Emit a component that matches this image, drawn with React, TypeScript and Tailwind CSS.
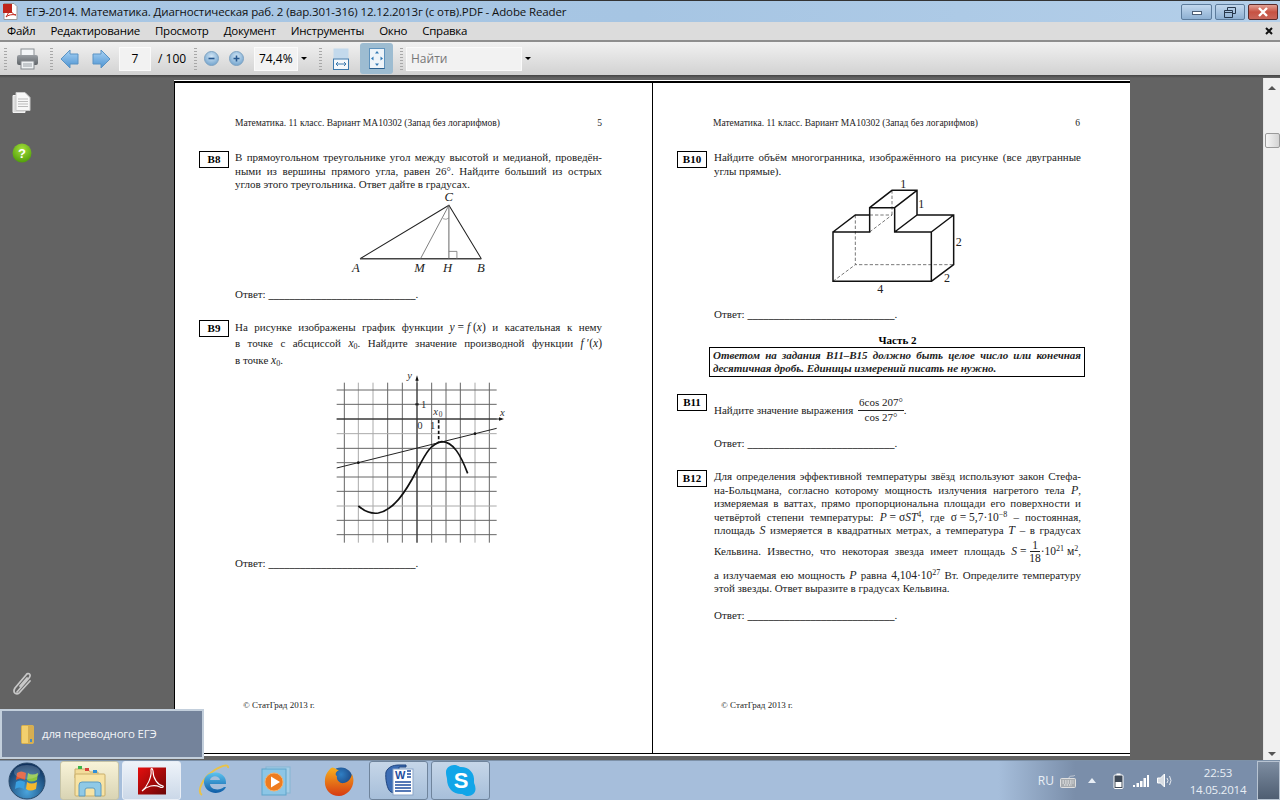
import React from "react";

const serif = "font-['Liberation_Serif','Noto_Serif',serif]";

function Line({ children, h = "h-[13.5px] leading-[13.5px]", last = true }: { children: React.ReactNode; h?: string; last?: boolean }) {
  return <div className={`${h} whitespace-nowrap ${last ? "text-justify [text-align-last:justify]" : ""}`}>{children}</div>;
}

function F({ children }: { children: React.ReactNode }) {
  return <span className="inline-block [text-align-last:left] text-[11.5px]">{children}</span>;
}

function Box({ children }: { children: React.ReactNode }) {
  return (
    <div className="w-[30px] h-[17px] shrink-0 border border-black flex items-center justify-center font-bold text-[11px] text-black leading-none">
      {children}
    </div>
  );
}

function Answer({ className = "" }: { className?: string }) {
  return (
    <div className={`h-[13.5px] leading-[13.5px] whitespace-nowrap ${className}`}>
      Ответ: <span className="font-bold text-[10.5px]">____________________________</span>.
    </div>
  );
}

function Header({ n }: { n: string }) {
  return (
    <div className="flex justify-between w-[367px] ml-[60px] mt-[34px] h-[12px] leading-[12px] text-[9.5px] text-[#222]">
      <span>Математика. 11 класс. Вариант МА10302 (Запад без логарифмов)</span>
      <span>{n}</span>
    </div>
  );
}

function Footer() {
  return <div className="mt-auto mb-[42px] ml-[68px] h-[12px] leading-[12px] text-[9px] text-[#222]">© СтатГрад 2013 г.</div>;
}

function Triangle() {
  return (
    <svg width="147" height="84" viewBox="470 150 440 250" className="ml-[111px] -mt-[2px] block">
      <path d="M512 355L778 195L875 355" fill="none" stroke="#222" strokeWidth="3" />
      <path d="M512 355H875" stroke="#444" strokeWidth="4" />
      <path d="M693 355L778 195" stroke="#666" strokeWidth="2.5" />
      <path d="M778 195V355" stroke="#666" strokeWidth="3" />
      <path d="M778 333H802V355" fill="none" stroke="#777" strokeWidth="2.5" />
      <path d="M760 235Q770 240 778 233" fill="none" stroke="#777" strokeWidth="2" />
      <g fontFamily="Liberation Serif" fontStyle="italic" fontSize="38" fill="#222">
        <text x="765" y="183">C</text>
        <text x="488" y="396">A</text>
        <text x="674" y="396">M</text>
        <text x="760" y="396">H</text>
        <text x="862" y="396">B</text>
      </g>
    </svg>
  );
}

function Graph() {
  const xs = [103, 145, 189, 233, 277, 321, 365, 408, 451, 495, 538];
  const ys = [90, 133, 177, 221, 265, 308, 351, 394, 438, 481, 524];
  return (
    <svg width="210" height="182" viewBox="0 24 630 546" className="ml-[75px] -mt-px block">
      {xs.map((x, i) => (
        <path key={x} d={`M${x} 68V548`} stroke={i === 1 || i === 2 || i === 9 ? "#aaa" : "#666"} strokeWidth="3" />
      ))}
      {ys.map((y, i) => (
        <path key={y} d={`M80 ${y}H560`} stroke={i === 3 || i === 8 ? "#aaa" : "#666"} strokeWidth="3" />
      ))}
      <path d="M80 177H575" stroke="#222" strokeWidth="3" />
      <path d="M321 60V548" stroke="#333" strokeWidth="3" />
      <path d="M321 46l-5 16h10zM582 177l-15 -5v10z" fill="#111" />
      <path d="M80 324L560 205" stroke="#222" strokeWidth="3" />
      <path d="M145 438C165 455 185 462 205 459C250 450 285 400 321 330C345 285 360 252 395 245C430 245 452 285 473 340" fill="none" stroke="#111" strokeWidth="5" />
      <path d="M386 180V245" stroke="#111" strokeWidth="5" strokeDasharray="10 6" />
      <circle cx="145" cy="308" r="4" fill="#111" />
      <circle cx="495" cy="221" r="4" fill="#111" />
      <rect x="316" y="130" width="10" height="6" fill="#222" />
      <g fontFamily="Liberation Serif" fontSize="32" fill="#333">
        <text x="292" y="56" fontStyle="italic">y</text>
        <text x="333" y="143">1</text>
        <text x="370" y="166" fontStyle="italic">x</text>
        <text x="386" y="170" fontSize="22">0</text>
        <text x="570" y="168" fontStyle="italic">x</text>
        <text x="322" y="207">0</text>
        <text x="360" y="207">1</text>
      </g>
    </svg>
  );
}

function Solid() {
  return (
    <svg width="140" height="120" viewBox="470 110 420 360" className="ml-[113px] mt-[-1px] block">
      <path d="M555 224V373H850M488 423L555 373M598 224H665M665 150V224M598 275L665 224" fill="none" stroke="#333" strokeWidth="2" strokeDasharray="10 6" />
      <path d="M488 423H783V275H673V202H598V275H488ZM488 275L555 224H598M598 202L665 150H740V224H850V373L783 423M673 202L740 150M673 275L740 224M783 275L850 224M783 423V275" fill="none" stroke="#111" strokeWidth="4.5" />
      <g fontFamily="Liberation Serif" fontSize="36" fill="#222">
        <text x="690" y="144">1</text>
        <text x="744" y="204">1</text>
        <text x="856" y="316">2</text>
        <text x="821" y="426">2</text>
        <text x="621" y="458">4</text>
      </g>
    </svg>
  );
}

function LeftPage() {
  return (
    <div className={`w-[478px] h-full border-l border-black flex flex-col text-[11px] text-[#222] ${serif}`}>
      <Header n="5" />
      <div className="flex ml-[24px] mt-[22px]">
        <Box>В8</Box>
        <div className="ml-[6px] w-[367px]">
          <Line>В прямоугольном треугольнике угол между высотой и медианой, проведён-</Line>
          <Line>ными из вершины прямого угла, равен 26°. Найдите больший из острых</Line>
          <Line last={false}>углов этого треугольника. Ответ дайте в градусах.</Line>
          <Triangle />
          <Answer className="mt-[14px]" />
        </div>
      </div>
      <div className="flex ml-[24px] mt-[19px]">
        <Box>В9</Box>
        <div className="ml-[6px] w-[367px]">
          <Line h="h-[15px] leading-[15px]">На рисунке изображены график функции <F><i>y</i> = <i>f</i> (<i>x</i>)</F> и касательная к нему</Line>
          <Line h="h-[17px] leading-[17px]">в точке с абсциссой <F><i>x</i><sub className="text-[8px] leading-none">0</sub></F>. Найдите значение производной функции <F><i>f</i> ′(<i>x</i>)</F></Line>
          <Line h="h-[17px] leading-[17px]" last={false}>в точке <F><i>x</i><sub className="text-[8px] leading-none">0</sub></F>.</Line>
          <Graph />
          <Answer className="mt-[7px]" />
        </div>
      </div>
      <Footer />
    </div>
  );
}

function RightPage() {
  return (
    <div className={`flex-1 h-full border-l border-black flex flex-col text-[11px] text-[#222] ${serif}`}>
      <Header n="6" />
      <div className="flex ml-[24px] mt-[22px]">
        <Box>В10</Box>
        <div className="ml-[7px] w-[367px]">
          <Line>Найдите объём многогранника, изображённого на рисунке (все двугранные</Line>
          <Line last={false}>углы прямые).</Line>
          <Solid />
          <Answer className="mt-[11px]" />
        </div>
      </div>
      <div className="ml-[61px] w-[367px] mt-[12px] h-[12px] leading-[12px] text-center font-bold text-black">Часть 2</div>
      <div className="ml-[56px] w-[376px] h-[30px] mt-[1px] border border-black px-[3px] pt-px font-bold italic">
        <Line>Ответом на задания В11–В15 должно быть целое число или конечная</Line>
        <Line last={false}>десятичная дробь. Единицы измерений писать не нужно.</Line>
      </div>
      <div className="flex ml-[24px] mt-[17px]">
        <Box>В11</Box>
        <div className="ml-[7px] w-[367px]">
          <div className="flex items-center h-[31px] whitespace-nowrap">
            <span className="mt-[2px]">Найдите значение выражения&nbsp;</span>
            <span className="inline-flex flex-col items-center ml-[2px] leading-[13px] mt-[2px]">
              <span className="px-px border-b border-[#222] pb-px">6cos 207°</span>
              <span>cos 27°</span>
            </span>
            <span className="mt-[2px]">.</span>
          </div>
          <Answer className="mt-[12px]" />
        </div>
      </div>
      <div className="flex ml-[24px] mt-[20px]">
        <Box>В12</Box>
        <div className="ml-[7px] w-[367px]">
          <Line>Для определения эффективной температуры звёзд используют закон Стефа-</Line>
          <Line>на-Больцмана, согласно которому мощность излучения нагретого тела <i className="text-[12px]">P</i>,</Line>
          <Line>измеряемая в ваттах, прямо пропорциональна площади его поверхности и</Line>
          <Line>четвёртой степени температуры: <F><i>P</i> = σ<i>ST</i><sup className="text-[8px] leading-none">4</sup></F>, где <F>σ = 5,7·10<sup className="text-[8px] leading-none">−8</sup></F> – постоянная,</Line>
          <Line>площадь <i className="text-[12px]">S</i> измеряется в квадратных метрах, а температура <i className="text-[12px]">T</i> – в градусах</Line>
          <Line h="h-[27px] leading-[27px]">
            Кельвина. Известно, что некоторая звезда имеет площадь{" "}
            <F>
              <i>S</i> ={" "}
              <span className="inline-flex flex-col items-center align-middle leading-[12px]">
                <span className="border-b border-[#222] px-[2px]">1</span>
                <span>18</span>
              </span>
              ·10<sup className="text-[8px] leading-none">21</sup> м<sup className="text-[8px] leading-none">2</sup>
            </F>,
          </Line>
          <Line h="h-[13.5px] leading-[13.5px] mt-[4px]">а излучаемая ею мощность <i className="text-[12px]">P</i> равна <F>4,104·10<sup className="text-[8px] leading-none">27</sup></F> Вт. Определите температуру</Line>
          <Line last={false}>этой звезды. Ответ выразите в градусах Кельвина.</Line>
          <Answer className="mt-[13px]" />
        </div>
      </div>
      <Footer />
    </div>
  );
}

function Gripper() {
  return <div className="w-[3px] h-[22px] shrink-0 bg-[repeating-linear-gradient(to_bottom,#a8a8a8_0,#a8a8a8_1px,transparent_1px,transparent_3px)]" />;
}

function PrintIcon() {
  return (
    <svg width="23" height="22" viewBox="0 0 23 22" className="shrink-0">
      <defs>
        <linearGradient id="pg" x1="0" y1="0" x2="0" y2="1">
          <stop offset="0" stopColor="#9a9ea3" />
          <stop offset="1" stopColor="#5f6468" />
        </linearGradient>
      </defs>
      <rect x="5" y="1" width="13" height="7" fill="#f3f5f7" stroke="#8a8f94" />
      <rect x="1" y="7" width="21" height="10" rx="2" fill="url(#pg)" />
      <rect x="5" y="13" width="13" height="8" fill="#eef1f3" stroke="#858a8f" />
      <path d="M7 16h9M7 18h9" stroke="#9aa0a6" />
    </svg>
  );
}

function Arrow({ right = false }: { right?: boolean }) {
  return (
    <svg width="19" height="20" viewBox="0 0 19 20" className={`shrink-0 ${right ? "-scale-x-100" : ""}`}>
      <defs>
        <linearGradient id="ag" x1="0" y1="0" x2="0" y2="1">
          <stop offset="0" stopColor="#a9d3f5" />
          <stop offset="1" stopColor="#4d93d1" />
        </linearGradient>
      </defs>
      <path d="M1 10L10 1V5H18V15H10V19Z" fill="url(#ag)" stroke="#5a93c4" strokeLinejoin="round" />
    </svg>
  );
}

function ZoomBtn({ plus = false }: { plus?: boolean }) {
  return (
    <svg width="15" height="15" viewBox="0 0 15 15" className="shrink-0">
      <defs>
        <radialGradient id="zg" cx="0.5" cy="0.35" r="0.7">
          <stop offset="0" stopColor="#d3e6f5" />
          <stop offset="1" stopColor="#6b9fcb" />
        </radialGradient>
      </defs>
      <circle cx="7.5" cy="7.5" r="7" fill="url(#zg)" stroke="#7fa3c2" />
      <path d={plus ? "M4.5 7.5h6M7.5 4.5v6" : "M4.5 7.5h6"} stroke="#27588f" strokeWidth="1.6" />
    </svg>
  );
}

function Caret({ className = "" }: { className?: string }) {
  return <div className={`w-0 h-0 border-x-[3px] border-x-transparent border-t-[3px] border-t-black shrink-0 ${className}`} />;
}

function Toolbar() {
  const input = "h-[24px] bg-[#f2f2f2] border border-[#fafafa] shrink-0 flex items-center";
  return (
    <div className="h-[33px] flex items-center bg-gradient-to-b from-[#f1f1f1] to-[#d2d2d2] font-['Open_Sans',sans-serif] text-[12px] text-black pl-[4px] relative">
      <Gripper />
      <div className="ml-[9px]"><PrintIcon /></div>
      <div className="ml-[11px]"><Gripper /></div>
      <div className="ml-[7px]"><Arrow /></div>
      <div className="ml-[13px]"><Arrow right /></div>
      <div className={`${input} ml-[8px] w-[32px] justify-center`}>7</div>
      <span className="ml-[7px] w-[30px] whitespace-nowrap">/ 100</span>
      <div className="ml-[6px]"><Gripper /></div>
      <div className="ml-[7px]"><ZoomBtn /></div>
      <div className="ml-[10px]"><ZoomBtn plus /></div>
      <div className={`${input} ml-[10px] w-[44px] pl-[4px]`}>74,4%</div>
      <Caret className="ml-[3px]" />
      <div className="ml-[12px]"><Gripper /></div>
      <svg width="16" height="22" viewBox="0 0 16 22" className="ml-[11px] shrink-0">
        <rect x="0.5" y="0.5" width="15" height="10" fill="#c3d9ec" />
        <rect x="0.5" y="11" width="15" height="10.5" fill="#f5f8fb" stroke="#3d79ad" />
        <path d="M3 16h10M3 16l2-2M3 16l2 2M13 16l-2-2M13 16l-2 2" stroke="#3d79ad" fill="none" />
      </svg>
      <div className="ml-[11px] w-[33px] h-[31px] rounded-[3px] bg-[#9dbcd1] flex items-center justify-center shrink-0">
        <svg width="16" height="21" viewBox="0 0 16 21">
          <rect x="0.5" y="0.5" width="15" height="20" fill="#eef4f9" stroke="#5f93bd" />
          <path d="M8 3l2 2.5H6zM8 18l2-2.5H6zM2 10.5L4.5 8.5v4zM14 10.5L11.5 8.5v4z" fill="#3179b5" />
          <path d="M0.5 20.5h15" stroke="#2a5f8f" />
        </svg>
      </div>
      <div className="ml-[7px]"><Gripper /></div>
      <div className={`${input} ml-[3px] w-[116px] pl-[4px] text-[#777]`}>Найти</div>
      <Caret className="ml-[3px]" />
    </div>
  );
}

function WinButtons() {
  return (
    <div className="flex gap-[3px] items-start pt-[3px] pr-[2px]">
      <div className="w-[31px] h-[16px] rounded-[2px] border border-[#5d7c9c] bg-gradient-to-b from-[#c2d8ee] to-[#8eb0d2] flex items-center justify-center">
        <div className="w-[10px] h-[4px] bg-white border border-[#4c5e75] mt-[2px]" />
      </div>
      <div className="w-[30px] h-[16px] rounded-[2px] border border-[#5d7c9c] bg-gradient-to-b from-[#c2d8ee] to-[#8eb0d2] flex items-center justify-center">
        <svg width="12" height="11" viewBox="0 0 12 11">
          <path d="M3.5 3V.5h8v6H8.5M.5 3.5h8v7h-8zM.5 5.5h8" fill="none" stroke="#27384c" />
        </svg>
      </div>
      <div className="w-[30px] h-[16px] rounded-[2px] border border-[#5a2b2b] bg-gradient-to-b from-[#e0a095] via-[#c75243] to-[#c9665a] flex items-center justify-center">
        <svg width="12" height="10" viewBox="0 0 12 10">
          <path d="M2 1l8 8M10 1L2 9" stroke="#fff" strokeWidth="2.4" />
        </svg>
      </div>
    </div>
  );
}

function TitleBar() {
  return (
    <div className="h-[22px] border-t border-[#333] bg-gradient-to-r from-[#a9c7e4] via-[#a6c5e3] to-[#b4cfe9] flex items-start justify-between font-['Open_Sans',sans-serif] text-[11.5px] tracking-[-0.12px] text-[#111]">
      <div className="flex items-center h-[21px] pl-[3px] whitespace-nowrap">
        <svg width="15" height="17" viewBox="0 0 15 17" className="shrink-0">
          <path d="M1 .5h10l3 3v13H1z" fill="#fff" stroke="#999" />
          <rect x="0" y="1" width="9" height="9" fill="#c0261c" />
          <path d="M3 14C6 10 7 6 6.5 3 7 8 9 11 13 12 9 11 5 12 3 14Z" fill="none" stroke="#c0261c" />
        </svg>
        <span className="ml-[8px]">ЕГЭ-2014. Математика. Диагностическая раб. 2 (вар.301-316) 12.12.2013г (с отв).PDF - Adobe Reader</span>
      </div>
      <WinButtons />
    </div>
  );
}

function MenuBar() {
  return (
    <div className="h-[20px] bg-[#dcdcdc] border-b-2 border-b-[#8e8e8e] flex items-center justify-between font-['Open_Sans',sans-serif] text-[11.5px] tracking-[-0.25px] text-black pl-[7px] pr-[2px]">
      <div className="flex gap-[15px]">
        {["Файл", "Редактирование", "Просмотр", "Документ", "Инструменты", "Окно", "Справка"].map((m) => (
          <span key={m}>{m}</span>
        ))}
      </div>
      <svg width="8" height="8" viewBox="0 0 8 8" className="mr-[5px] -mt-px">
        <path d="M1 1l6 6M7 1L1 7" stroke="#111" strokeWidth="2" />
      </svg>
    </div>
  );
}

function SideBar() {
  return (
    <div className="w-[174px] h-full shrink-0 flex flex-col pl-[12px] pt-[14px]">
      <svg width="20" height="21" viewBox="0 0 20 21">
        <path d="M1 3.5h12v17H1z" fill="#dcdcdc" stroke="#f2f2f2" />
        <path d="M4 .5h9l5 5v13H4z" fill="#f8f8f8" stroke="#c8c8c8" />
        <path d="M6 7h10M6 9.5h10M6 12h10M6 14.5h10" stroke="#bbb" />
      </svg>
      <svg width="20" height="20" viewBox="0 0 20 20" className="mt-[30px]">
        <defs>
          <radialGradient id="hg" cx="0.5" cy="0.3" r="0.75">
            <stop offset="0" stopColor="#a6e03c" />
            <stop offset="1" stopColor="#4a9a06" />
          </radialGradient>
        </defs>
        <circle cx="10" cy="10" r="9.5" fill="url(#hg)" />
        <text x="10" y="15" textAnchor="middle" fontFamily="Liberation Sans" fontWeight="700" fontSize="13" fill="#fff">?</text>
      </svg>
      <svg width="22" height="24" viewBox="0 0 22 24" className="mt-[509px]">
        <path d="M5 20L17 6C20 2 16 0 14 3L3 16C0 21 5 24 8 20L18 9M8 14l7-8" fill="none" stroke="#c8c8c8" strokeWidth="1.7" strokeLinecap="round" />
      </svg>
    </div>
  );
}

function ScrollBar() {
  return (
    <div className="w-[17px] h-full shrink-0 bg-[#f0f0f0] border-l border-[#e6e6e6] flex flex-col items-center pt-[8px]">
      <div className="w-0 h-0 border-x-[4px] border-x-transparent border-b-[4px] border-b-[#555]" />
      <div className="mt-[43px] w-[15px] h-[15px] rounded-[2px] border border-[#9a9a9a] bg-gradient-to-r from-[#f6f6f6] to-[#d4d4d4]" />
      <div className="flex-1" />
      <div className="w-0 h-0 border-x-[4px] border-x-transparent border-t-[4px] border-t-[#555] mb-[4px]" />
    </div>
  );
}

function TaskBtn({ children, tone = "plain" }: { children: React.ReactNode; tone?: "plain" | "active" | "warm" }) {
  const cls =
    tone === "warm"
      ? "bg-gradient-to-b from-[#f8f3d8] to-[#d9d4b4] border-[#c6c4a8]"
      : tone === "active"
      ? "bg-gradient-to-b from-[#eef3f9] to-[#cbd8e8] border-[#e8eef6]"
      : "bg-gradient-to-b from-[#c6d6e8] to-[#a7bfda] border-[#6f849c]";
  return <div className={`w-[59px] h-[39px] shrink-0 rounded-[3px] border flex items-center justify-center ${cls}`}>{children}</div>;
}

function Orb() {
  return (
    <svg width="38" height="38" viewBox="0 0 38 38">
      <defs>
        <radialGradient id="og" cx="0.5" cy="0.8" r="0.8">
          <stop offset="0" stopColor="#4aa4dc" />
          <stop offset="1" stopColor="#0c2b57" />
        </radialGradient>
      </defs>
      <circle cx="19" cy="19" r="18" fill="url(#og)" stroke="#2b4a6a" />
      <path d="M9 11Q13 8 18 11L17 18Q12 15 8 18Z" fill="#e2512a" />
      <path d="M20 11Q24 14 30 11L29 18Q23 21 19 18Z" fill="#8bc53f" />
      <path d="M8 20Q12 17 17 20L16 27Q11 24 7 27Z" fill="#3aa0e0" />
      <path d="M19 20Q23 23 29 20L28 27Q22 30 18 27Z" fill="#f5b82e" />
      <ellipse cx="19" cy="10" rx="13" ry="7" fill="#fff" opacity="0.18" />
    </svg>
  );
}

function FolderIcon() {
  return (
    <svg width="34" height="32" viewBox="0 0 34 32">
      <path d="M2 4h13l2 3h8v6H2z" fill="#f3dc9a" stroke="#c9ae6b" />
      <rect x="5" y="1" width="4" height="3" fill="#3cb54a" />
      <rect x="12" y="3" width="4" height="3" fill="#d8433a" />
      <rect x="20" y="5" width="4" height="3" fill="#2f8fd8" />
      <rect x="2" y="9" width="30" height="22" rx="1" fill="#f7e3a4" stroke="#c9ae6b" />
      <path d="M6 31V20q0-3 3-3h16q3 0 3 3v11h-6v-6q0-2-2-2h-6q-2 0-2 2v6z" fill="#8fc9e6" stroke="#5f9cc0" />
    </svg>
  );
}

function AdobeIcon() {
  return (
    <svg width="30" height="28" viewBox="0 0 30 28">
      <defs>
        <linearGradient id="rg" x1="0" y1="0" x2="1" y2="1">
          <stop offset="0" stopColor="#e60e0e" />
          <stop offset="1" stopColor="#6b0606" />
        </linearGradient>
      </defs>
      <rect x="1" y="0.5" width="28" height="27" fill="url(#rg)" />
      <path d="M5 24C10 20 15 10 14 3 14 1 15.500 1 16 4 16 12 21 18 26 19 27 20 25 21 23 20 17 17 10 19 5 24Z" fill="none" stroke="#fff" strokeWidth="1.1" />
    </svg>
  );
}

function IEIcon() {
  return (
    <svg width="32" height="36" viewBox="0 0 32 36">
      <defs>
        <linearGradient id="ie" x1="0" y1="0" x2="0" y2="1">
          <stop offset="0" stopColor="#5cc3ef" />
          <stop offset="1" stopColor="#0d5ca6" />
        </linearGradient>
      </defs>
      <path d="M4 32C-2 28 6 14 14 9 22 3 31 0 30 5" fill="none" stroke="#e8c24a" strokeWidth="2" />
      <path d="M28 21H12C12 27 22 28 26 24H28C25 32 8 33 6 20 5 8 23 6 27 15 28 17 28 19 28 21ZM12 17H22C21 12 13 12 12 17Z" fill="url(#ie)" />
    </svg>
  );
}

function WMPIcon() {
  return (
    <svg width="32" height="32" viewBox="0 0 32 32">
      <rect x="6" y="2" width="24" height="26" fill="#a7d3ea" opacity="0.8" stroke="#7fb5d3" />
      <rect x="2" y="4" width="24" height="26" fill="#8cc6e6" stroke="#5fa5cb" />
      <circle cx="14" cy="17" r="9" fill="#ee7c1f" stroke="#f6b26b" />
      <path d="M11 11.500l9 5.500-9 5.500z" fill="#fff" />
    </svg>
  );
}

function FirefoxIcon() {
  return (
    <svg width="32" height="32" viewBox="0 0 32 32">
      <defs>
        <radialGradient id="ff" cx="0.5" cy="0.3" r="0.7">
          <stop offset="0" stopColor="#2f7fc4" />
          <stop offset="1" stopColor="#16356e" />
        </radialGradient>
        <linearGradient id="ff2" x1="0" y1="0" x2="0" y2="1">
          <stop offset="0" stopColor="#f6b01e" />
          <stop offset="1" stopColor="#d63a12" />
        </linearGradient>
      </defs>
      <circle cx="17" cy="14" r="11.500" fill="url(#ff)" />
      <path d="M7 3C10 1 12 5 15 5 11 7 11 10 13 11 12 15 16 19 20 18 25 17 27 13 28 9 33 20 24 31 15 31 6 31 0 24 1 15 1 10 4 6 7 3Z" fill="url(#ff2)" />
    </svg>
  );
}

function WordIcon() {
  return (
    <svg width="30" height="33" viewBox="0 0 30 33">
      <path d="M2 8C4 3 9 1 15 1H22V3H15V30L7 28C3 26 1 14 2 8Z" fill="#3b6cb4" stroke="#20457f" />
      <rect x="9" y="5" width="20" height="26" fill="#fff" stroke="#8aa5c9" />
      <text x="11" y="15" fontFamily="Liberation Sans" fontWeight="700" fontSize="11" fill="#1f4e9e">W</text>
      <path d="M23 7h4M23 10h4M23 13h4M11 18h16M11 21h16M11 24h16M11 27h16" stroke="#1f4e9e" strokeWidth="1.4" />
    </svg>
  );
}

function SkypeIcon() {
  return (
    <svg width="30" height="33" viewBox="0 0 30 33">
      <path d="M8 1C12 1 13 3 15 3 23 3 29 9 28 18 28 20 29.500 21 29.500 25 29.500 29 26 32 22 32 18 32 18 30 15 30 7 30 1 24 1 15 1 13 0 12 0 8 0 4 4 1 8 1Z" fill="#12a5e8" />
      <text x="15" y="24" textAnchor="middle" fontFamily="Liberation Sans" fontWeight="700" fontSize="22" fill="#fff">S</text>
    </svg>
  );
}

function Taskbar() {
  return (
    <div className="h-[40px] shrink-0 flex items-end border-t border-[#7d91a8] bg-[linear-gradient(to_right,#a6bedb_0%,#a6bedb_78%,#7a8eaa_84%,#7a8eaa_100%)] font-['Open_Sans',sans-serif] text-[#e8eef5]">
      <div className="w-[59px] h-[39px] shrink-0 flex items-center justify-center -ml-[3px] mr-[4px]"><Orb /></div>
      <div className="flex gap-[3px] items-end">
        <TaskBtn tone="warm"><FolderIcon /></TaskBtn>
        <TaskBtn tone="active"><AdobeIcon /></TaskBtn>
      </div>
      <div className="flex items-center h-[39px]">
        <div className="w-[62px] ml-[2px] flex justify-center"><IEIcon /></div>
        <div className="w-[62px] flex justify-center"><WMPIcon /></div>
        <div className="w-[62px] ml-[2px] flex justify-center"><FirefoxIcon /></div>
      </div>
      <div className="flex gap-[3px] items-end ml-[-2px]">
        <TaskBtn><WordIcon /></TaskBtn>
        <TaskBtn><SkypeIcon /></TaskBtn>
      </div>
      <div className="flex-1" />
      <div className="flex items-center h-[39px] text-[12px]">
        <span>RU</span>
        <svg width="16" height="14" viewBox="0 0 16 14" className="ml-[6px]">
          <path d="M9 4c0-3 5-1 6-3" fill="none" stroke="#c8ced6" />
          <rect x="0.5" y="4.500" width="15" height="9" rx="1" fill="#a8acb0" stroke="#e0e0e0" />
          <path d="M2.500 7h11M2.500 9h11M4 11h8" stroke="#f0f0f0" strokeDasharray="1.500 1" />
        </svg>
        <div className="ml-[12px] w-0 h-0 border-x-[4px] border-x-transparent border-b-[5px] border-b-[#e8eef5]" />
        <svg width="11" height="16" viewBox="0 0 11 16" className="ml-[17px]">
          <rect x="3.500" y="0.500" width="4" height="2" fill="#fff" />
          <rect x="1" y="2" width="9" height="13.500" rx="1" fill="#3f4a58" stroke="#fff" />
          <rect x="2.500" y="9" width="6" height="5" fill="#fff" />
        </svg>
        <svg width="16" height="12" viewBox="0 0 16 12" className="ml-[9px]">
          <path d="M0 10h2v2H0zM3.500 8h2.500v4H3.500zM7 6h2.500v6H7zM10.500 3h2.500v9h-2.500zM14 0h2v12h-2z" fill="#fff" />
        </svg>
        <svg width="16" height="15" viewBox="0 0 16 15" className="ml-[8px]">
          <path d="M.5 5h3l4-4v13l-4-4h-3z" fill="#d8dde3" stroke="#fff" />
          <path d="M10 5q2 2.500 0 5M12.500 3q3 4.500 0 9" fill="none" stroke="#e6eaef" />
        </svg>
        <div className="w-[78px] ml-[6px] text-[11.5px] tracking-[-0.2px] leading-[17px] text-center flex flex-col">
          <span>22:53</span>
          <span>14.05.2014</span>
        </div>
      </div>
      <div className="w-[23px] h-[39px] border border-[#b8c4d2] bg-gradient-to-b from-[#7d8da1] to-[#4f5e72]" />
    </div>
  );
}

export default function App() {
  return (
    <div className="relative w-[1280px] h-[800px] overflow-hidden flex flex-col bg-[#636363]">
      <TitleBar />
      <MenuBar />
      <Toolbar />
      <div className="h-[3px] shrink-0 bg-gradient-to-b from-[#444] to-[#636363]" />
      <div className="flex-1 min-h-0 flex">
        <SideBar />
        <div className="w-[956px] h-full shrink-0 pt-[2px]">
          <div className="bg-white h-[676px] pt-px pb-[2px]">
            <div className="flex h-full border-y border-black border-t-2">
              <LeftPage />
              <RightPage />
            </div>
          </div>
        </div>
        <div className="flex-1" />
        <ScrollBar />
      </div>
      <Taskbar />
      <div className="absolute left-0 top-[709px] w-[204px] h-[50px] bg-[#74839b] border-2 border-[#c3cfdc] flex items-center pl-[19px] font-['Open_Sans',sans-serif] text-[11.5px] tracking-[-0.2px] text-[#f2f4f7]">
        <svg width="13" height="19" viewBox="0 0 13 19" className="shrink-0">
          <rect x="0.500" y="0.500" width="12" height="18" rx="1" fill="#f2cf6e" stroke="#d8b04e" />
          <rect x="7" y="1" width="5" height="17" fill="#d6ae52" />
          <rect x="9" y="14" width="2" height="3" fill="#4a8ac0" />
        </svg>
        <span className="ml-[8px]">для переводного ЕГЭ</span>
      </div>
    </div>
  );
}
